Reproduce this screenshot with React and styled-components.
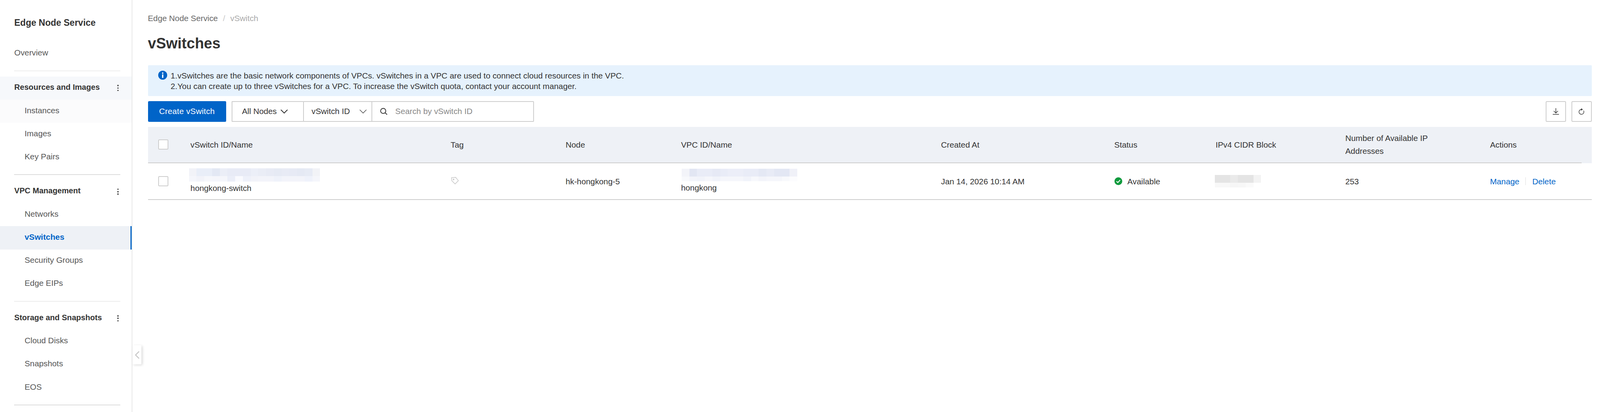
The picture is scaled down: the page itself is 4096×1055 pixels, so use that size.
import React from "react";
import styled, { createGlobalStyle } from "styled-components";

const GlobalStyle = createGlobalStyle`
  html, body {
    margin: 0;
    padding: 0;
    background: #fff;
    overflow: hidden;
  }
  * {
    box-sizing: border-box;
  }
`;

const BLUE = "#0064c8";
const LINE = "#cdcdcd";
const COLUMNS =
  "109.1px 666px 294.4px 295.5px 665.5px 443.6px 259.4px 332px 370.5px minmax(0, 1fr)";

const Page = styled.div`
  position: relative;
  display: flex;
  width: 4096px;
  height: 1055px;
  overflow: hidden;
  background: #fff;
  color: #333;
  font-family: "Liberation Sans", Arial, sans-serif;
  font-size: 20.8px;
`;

const Sidebar = styled.aside`
  flex: none;
  width: 339px;
  height: 1055px;
  border-right: 2px solid #e8e8e8;
`;

const Brand = styled.div`
  display: flex;
  align-items: center;
  height: 107.8px;
  padding: 9px 0 0 36.5px;
  font-size: 23px;
  font-weight: 700;
  color: #333;
`;

const NavRow = styled.div`
  display: flex;
  align-items: center;
  height: 59.1px;
  padding-left: ${(p) => (p.$sub ? "63px" : "36.5px")};
  padding-bottom: 4px;
  background: ${(p) => p.$bg || "transparent"};
  color: ${(p) => (p.$active ? BLUE : "#555")};
  font-weight: ${(p) => (p.$active ? 700 : 400)};
  border-right: ${(p) => (p.$active ? `3px solid ${BLUE}` : "none")};
`;

const NavGroup = styled(NavRow)`
  justify-content: space-between;
  padding-right: 33px;
  color: #333;
  font-size: 20.1px;
  font-weight: 700;
`;

const Dots = styled.span`
  display: flex;
  flex-direction: column;
  gap: 2.6px;
  margin-top: 4px;

  i {
    display: block;
    width: 3.6px;
    height: 3.6px;
    border-radius: 50%;
    background: #555;
  }
`;

const NavDivider = styled.div`
  height: 1.6px;
  margin: 14px 29px 13.4px 36px;
  background: #dcdcdc;
`;

const CollapseTab = styled.div`
  position: absolute;
  left: 339px;
  top: 884px;
  display: flex;
  align-items: center;
  justify-content: center;
  width: 23px;
  height: 49px;
  background: #fff;
  border-radius: 0 2px 2px 0;
  box-shadow: 3px 2px 6px rgba(0, 0, 0, 0.14);
`;

const Main = styled.main`
  flex: 1;
  min-width: 0;
  padding: 32px 21.4px 0 39.5px;
`;

const Breadcrumb = styled.div`
  display: flex;
  align-items: center;
  height: 30px;
  color: #666;
`;

const Slash = styled.span`
  margin: 0 13px;
  color: #c8c8c8;
`;

const CrumbCurrent = styled.span`
  color: #aaa;
`;

const Title = styled.h1`
  margin: 24px 0 0;
  height: 50px;
  font-size: 38px;
  line-height: 50px;
  font-weight: 700;
  color: #333;
`;

const Notice = styled.div`
  display: flex;
  gap: 9px;
  height: 79px;
  margin-top: 31px;
  padding: 14px 0 0 26.3px;
  background: #e6f2fd;
  border-radius: 2px;
  line-height: 26.5px;
`;

const NoticeIcon = styled.svg`
  flex: none;
  width: 23px;
  height: 23px;
`;

const Toolbar = styled.div`
  display: flex;
  align-items: stretch;
  height: 52.6px;
  margin-top: 13px;
`;

const PrimaryButton = styled.button`
  flex: none;
  width: 200px;
  margin-right: 14px;
  padding: 0;
  border: none;
  border-radius: 3px;
  background: ${BLUE};
  color: #fff;
  font: inherit;
  letter-spacing: 0.2px;
`;

const Select = styled.div`
  display: flex;
  align-items: center;
  flex: none;
  width: ${(p) => p.$w}px;
  height: 100%;
  padding: ${(p) => p.$pad};
  gap: 9px;
  border: 2px solid ${LINE};
  border-right-width: ${(p) => (p.$join ? 0 : "2px")};
  border-radius: ${(p) => (p.$join ? "2px 0 0 2px" : "2px")};
  color: ${(p) => p.$color || "#333"};
  justify-content: ${(p) => (p.$spread ? "space-between" : "flex-start")};
`;

const SearchBox = styled.div`
  display: flex;
  align-items: center;
  flex: none;
  width: 416.7px;
  gap: 20px;
  padding-left: 20px;
  border: 2px solid ${LINE};
  border-radius: 0 2px 2px 0;
  color: #888;
`;

const ToolActions = styled.div`
  display: flex;
  gap: 14px;
  margin-left: auto;
`;

const IconButton = styled.div`
  display: flex;
  align-items: center;
  justify-content: center;
  width: 52px;
  border: 2px solid ${LINE};
  border-radius: 3px;
`;

const TableWrap = styled.div`
  margin-top: 13px;
`;

const HeadBand = styled.div`
  background: #eef1f6;
`;

const Row = styled.div`
  display: grid;
  grid-template-columns: ${COLUMNS};
  align-items: center;
  height: 93.8px;
  border-bottom: 2px solid ${LINE};
`;

const HeadRow = styled(Row)`
  margin-right: 25.6px;
`;

const Cell = styled.div`
  min-width: 0;
  max-width: ${(p) => p.$max || "none"};
  line-height: 33px;
`;

const CheckCell = styled.div`
  padding-left: 26.6px;
`;

const Checkbox = styled.div`
  width: 26px;
  height: 26px;
  background: #fff;
  border: 2px solid ${LINE};
  border-radius: 3px;
`;

const Mosaic = styled.div`
  display: flex;
  flex-direction: column;
  width: max-content;
  margin-left: ${(p) => p.$shift || 0}px;
`;

const MosaicLine = styled.div`
  display: flex;
`;

const MosaicCell = styled.span`
  display: block;
  width: 19.75px;
  height: ${(p) => p.$h}px;
  background: ${(p) => p.$c};
`;

const TagIcon = styled.svg`
  display: block;
  width: 20px;
  height: 20px;
  margin: -3px 0 0 1.5px;
`;

const StatusWrap = styled.div`
  display: flex;
  align-items: center;
  gap: 13.5px;
`;

const Actions = styled.div`
  display: flex;
  align-items: center;
  gap: 15.5px;
  color: ${BLUE};
`;

const ActionSep = styled.span`
  display: block;
  width: 1px;
  height: 20px;
  margin-right: 1px;
  background: #ddd;
`;

const NAME_MOSAIC = [
  ["#f2f3f8", "#e9eef8", "#e9eef8", "#e3e8f4", "#ebeef7", "#e8ebf6", "#e8ebf6", "#e8ebf6", "#eceff8", "#eaedf6", "#e8ebf5", "#e6eaf4", "#e8ebf5", "#e7eaf5", "#e5e9f4", "#e7ebf5", "#f2f3f7"],
  ["#f5f6fb", "#f2f3f9", "#f6f7fb", "#f5f6fb", "#f5f6fb", "#ebeef8", "#f9fafe", "#eef1fa", "#f2f3f9", "#f3f4fa", "#f3f4fa", "#eff2fa", "#f3f4fa", "#f3f4fa", "#f3f4fa", "#eff2fb", "#f5f6fb"],
];

const VPC_MOSAIC = [
  ["#f3f4f9", "#e2e6f3", "#e9ecf7", "#e9ecf7", "#e6e9f5", "#e9ecf7", "#eceef8", "#eceef8", "#e9ecf7", "#e9ecf7", "#e4e8f4", "#e8ebf6", "#e3e7f4", "#e3e7f4", "#f0f1f8"],
  ["#f8f9fc", "#f3f4fa", "#f1f3fa", "#f5f6fb", "#f1f3fa", "#f5f6fb", "#f5f6fb", "#f5f6fb", "#f1f3fa", "#f7f8fc", "#f3f4fa", "#f5f6fb", "#f5f6fb", "#f8f9fc", "#fcfcfe"],
];

const IP_MOSAIC = [
  ["#e4e4e4", "#e4e4e4", "#eaeaea", "#e4e4e4", "#e4e4e4", "#f3f3f3"],
  ["#f8f8f8", "#f8f8f8", "#f6f6f6", "#f7f7f7", "#fafafa", "#ffffff"],
];

function Blur({ data, top, bottom, shift }) {
  return (
    <Mosaic $shift={shift}>
      <MosaicLine>
        {data[0].map((c, i) => (
          <MosaicCell key={i} $c={c} $h={top} />
        ))}
      </MosaicLine>
      <MosaicLine>
        {data[1].map((c, i) => (
          <MosaicCell key={i} $c={c} $h={bottom} />
        ))}
      </MosaicLine>
    </Mosaic>
  );
}

function MoreDots() {
  return (
    <Dots>
      <i />
      <i />
      <i />
    </Dots>
  );
}

function Chevron({ color, stroke = 1.6 }) {
  return (
    <svg width="19" height="11" viewBox="0 0 19 11" fill="none">
      <path d="M1 1l8.5 8.5L18 1" stroke={color} strokeWidth={stroke} />
    </svg>
  );
}

const NAV = [
  {
    title: "Resources and Images",
    items: ["Instances", "Images", "Key Pairs"],
  },
  {
    title: "VPC Management",
    items: ["Networks", "vSwitches", "Security Groups", "Edge EIPs"],
  },
  {
    title: "Storage and Snapshots",
    items: ["Cloud Disks", "Snapshots", "EOS"],
  },
];

function SideNav() {
  return (
    <Sidebar>
      <Brand>Edge Node Service</Brand>
      <NavRow>Overview</NavRow>
      <NavDivider />
      {NAV.map((group, g) => (
        <React.Fragment key={group.title}>
          <NavGroup $bg={g === 0 ? "#f6f8fb" : undefined}>
            {group.title}
            <MoreDots />
          </NavGroup>
          {group.items.map((item) => (
            <NavRow
              key={item}
              $sub
              $active={item === "vSwitches"}
              $bg={
                item === "vSwitches"
                  ? "#eef1f6"
                  : item === "Instances"
                    ? "#fbfbfc"
                    : undefined
              }
            >
              {item}
            </NavRow>
          ))}
          <NavDivider />
        </React.Fragment>
      ))}
    </Sidebar>
  );
}

export default function App() {
  return (
    <Page>
      <GlobalStyle />
      <SideNav />
      <CollapseTab>
        <svg width="12" height="20" viewBox="0 0 12 20" fill="none">
          <path d="M11 1L2 10l9 9" stroke="#bdbdbd" strokeWidth="2" />
        </svg>
      </CollapseTab>
      <Main>
        <Breadcrumb>
          Edge Node Service
          <Slash>/</Slash>
          <CrumbCurrent>vSwitch</CrumbCurrent>
        </Breadcrumb>
        <Title>vSwitches</Title>
        <Notice>
          <NoticeIcon viewBox="0 0 28 28">
            <circle cx="14" cy="14" r="14" fill={BLUE} />
            <rect x="12" y="11.5" width="4" height="11" fill="#fff" />
            <rect x="12" y="5.5" width="4" height="4" fill="#fff" />
          </NoticeIcon>
          <div>
            1.vSwitches are the basic network components of VPCs. vSwitches in a
            VPC are used to connect cloud resources in the VPC.
            <br />
            2.You can create up to three vSwitches for a VPC. To increase the
            vSwitch quota, contact your account manager.
          </div>
        </Notice>
        <Toolbar>
          <PrimaryButton>Create vSwitch</PrimaryButton>
          <Select $w={183} $pad="0 0 0 25px" $join>
            All Nodes
            <Chevron color="#333" stroke={2} />
          </Select>
          <Select $w={175.3} $pad="0 12px 0 20px" $join $spread>
            vSwitch ID
            <Chevron color="#555" />
          </Select>
          <SearchBox>
            <svg width="19" height="18" viewBox="0 0 19 18" fill="none">
              <circle cx="8" cy="8" r="6.6" stroke="#333" strokeWidth="2" />
              <path d="M13 13l5 4.5" stroke="#333" strokeWidth="2" />
            </svg>
            Search by vSwitch ID
          </SearchBox>
          <ToolActions>
            <IconButton>
              <svg width="16" height="17" viewBox="0 0 18 19" fill="none">
                <path
                  d="M9 0v14M3 8l6 6 6-6M0 17.6h18"
                  stroke="#333"
                  strokeWidth="1.7"
                />
              </svg>
            </IconButton>
            <IconButton>
              <svg width="15" height="17" viewBox="0 0 18 20" fill="none">
                <path
                  d="M9 3.7A7.5 7.5 0 1 0 15.5 7.5"
                  stroke="#333"
                  strokeWidth="1.7"
                />
                <path d="M8 0l5.4 3.7L8 7.4z" fill="#333" />
              </svg>
            </IconButton>
          </ToolActions>
        </Toolbar>
        <TableWrap>
          <HeadBand>
            <HeadRow>
              <CheckCell>
                <Checkbox />
              </CheckCell>
              <Cell>vSwitch ID/Name</Cell>
              <Cell>Tag</Cell>
              <Cell>Node</Cell>
              <Cell>VPC ID/Name</Cell>
              <Cell>Created At</Cell>
              <Cell>Status</Cell>
              <Cell>IPv4 CIDR Block</Cell>
              <Cell $max="270px">Number of Available IP Addresses</Cell>
              <Cell>Actions</Cell>
            </HeadRow>
          </HeadBand>
          <Row>
            <CheckCell>
              <Checkbox />
            </CheckCell>
            <Cell>
              <Blur data={NAME_MOSAIC} top={20} bottom={14} shift={-4} />
              hongkong-switch
            </Cell>
            <Cell>
              <TagIcon viewBox="0 0 26 25" fill="none">
                <path
                  d="M1 2l14-1 9 11-11 11L2 12z"
                  stroke="#c8c8c8"
                  strokeWidth="2"
                />
                <circle cx="8" cy="8" r="2.6" fill="#c8c8c8" />
              </TagIcon>
            </Cell>
            <Cell>hk-hongkong-5</Cell>
            <Cell>
              <Blur data={VPC_MOSAIC} top={20} bottom={12} shift={1.5} />
              hongkong
            </Cell>
            <Cell>Jan 14, 2026 10:14 AM</Cell>
            <Cell>
              <StatusWrap>
                <svg width="20" height="20" viewBox="0 0 20 20">
                  <circle cx="10" cy="10" r="10" fill="#0f9a3d" />
                  <path
                    d="M5.2 10.2l3.4 3.2 6-6.4"
                    fill="none"
                    stroke="#fff"
                    strokeWidth="2.2"
                  />
                </svg>
                Available
              </StatusWrap>
            </Cell>
            <Cell>
              <Blur data={IP_MOSAIC} top={20} bottom={12} shift={-2} />
            </Cell>
            <Cell>253</Cell>
            <Cell>
              <Actions>
                Manage
                <ActionSep />
                Delete
              </Actions>
            </Cell>
          </Row>
        </TableWrap>
      </Main>
    </Page>
  );
}
